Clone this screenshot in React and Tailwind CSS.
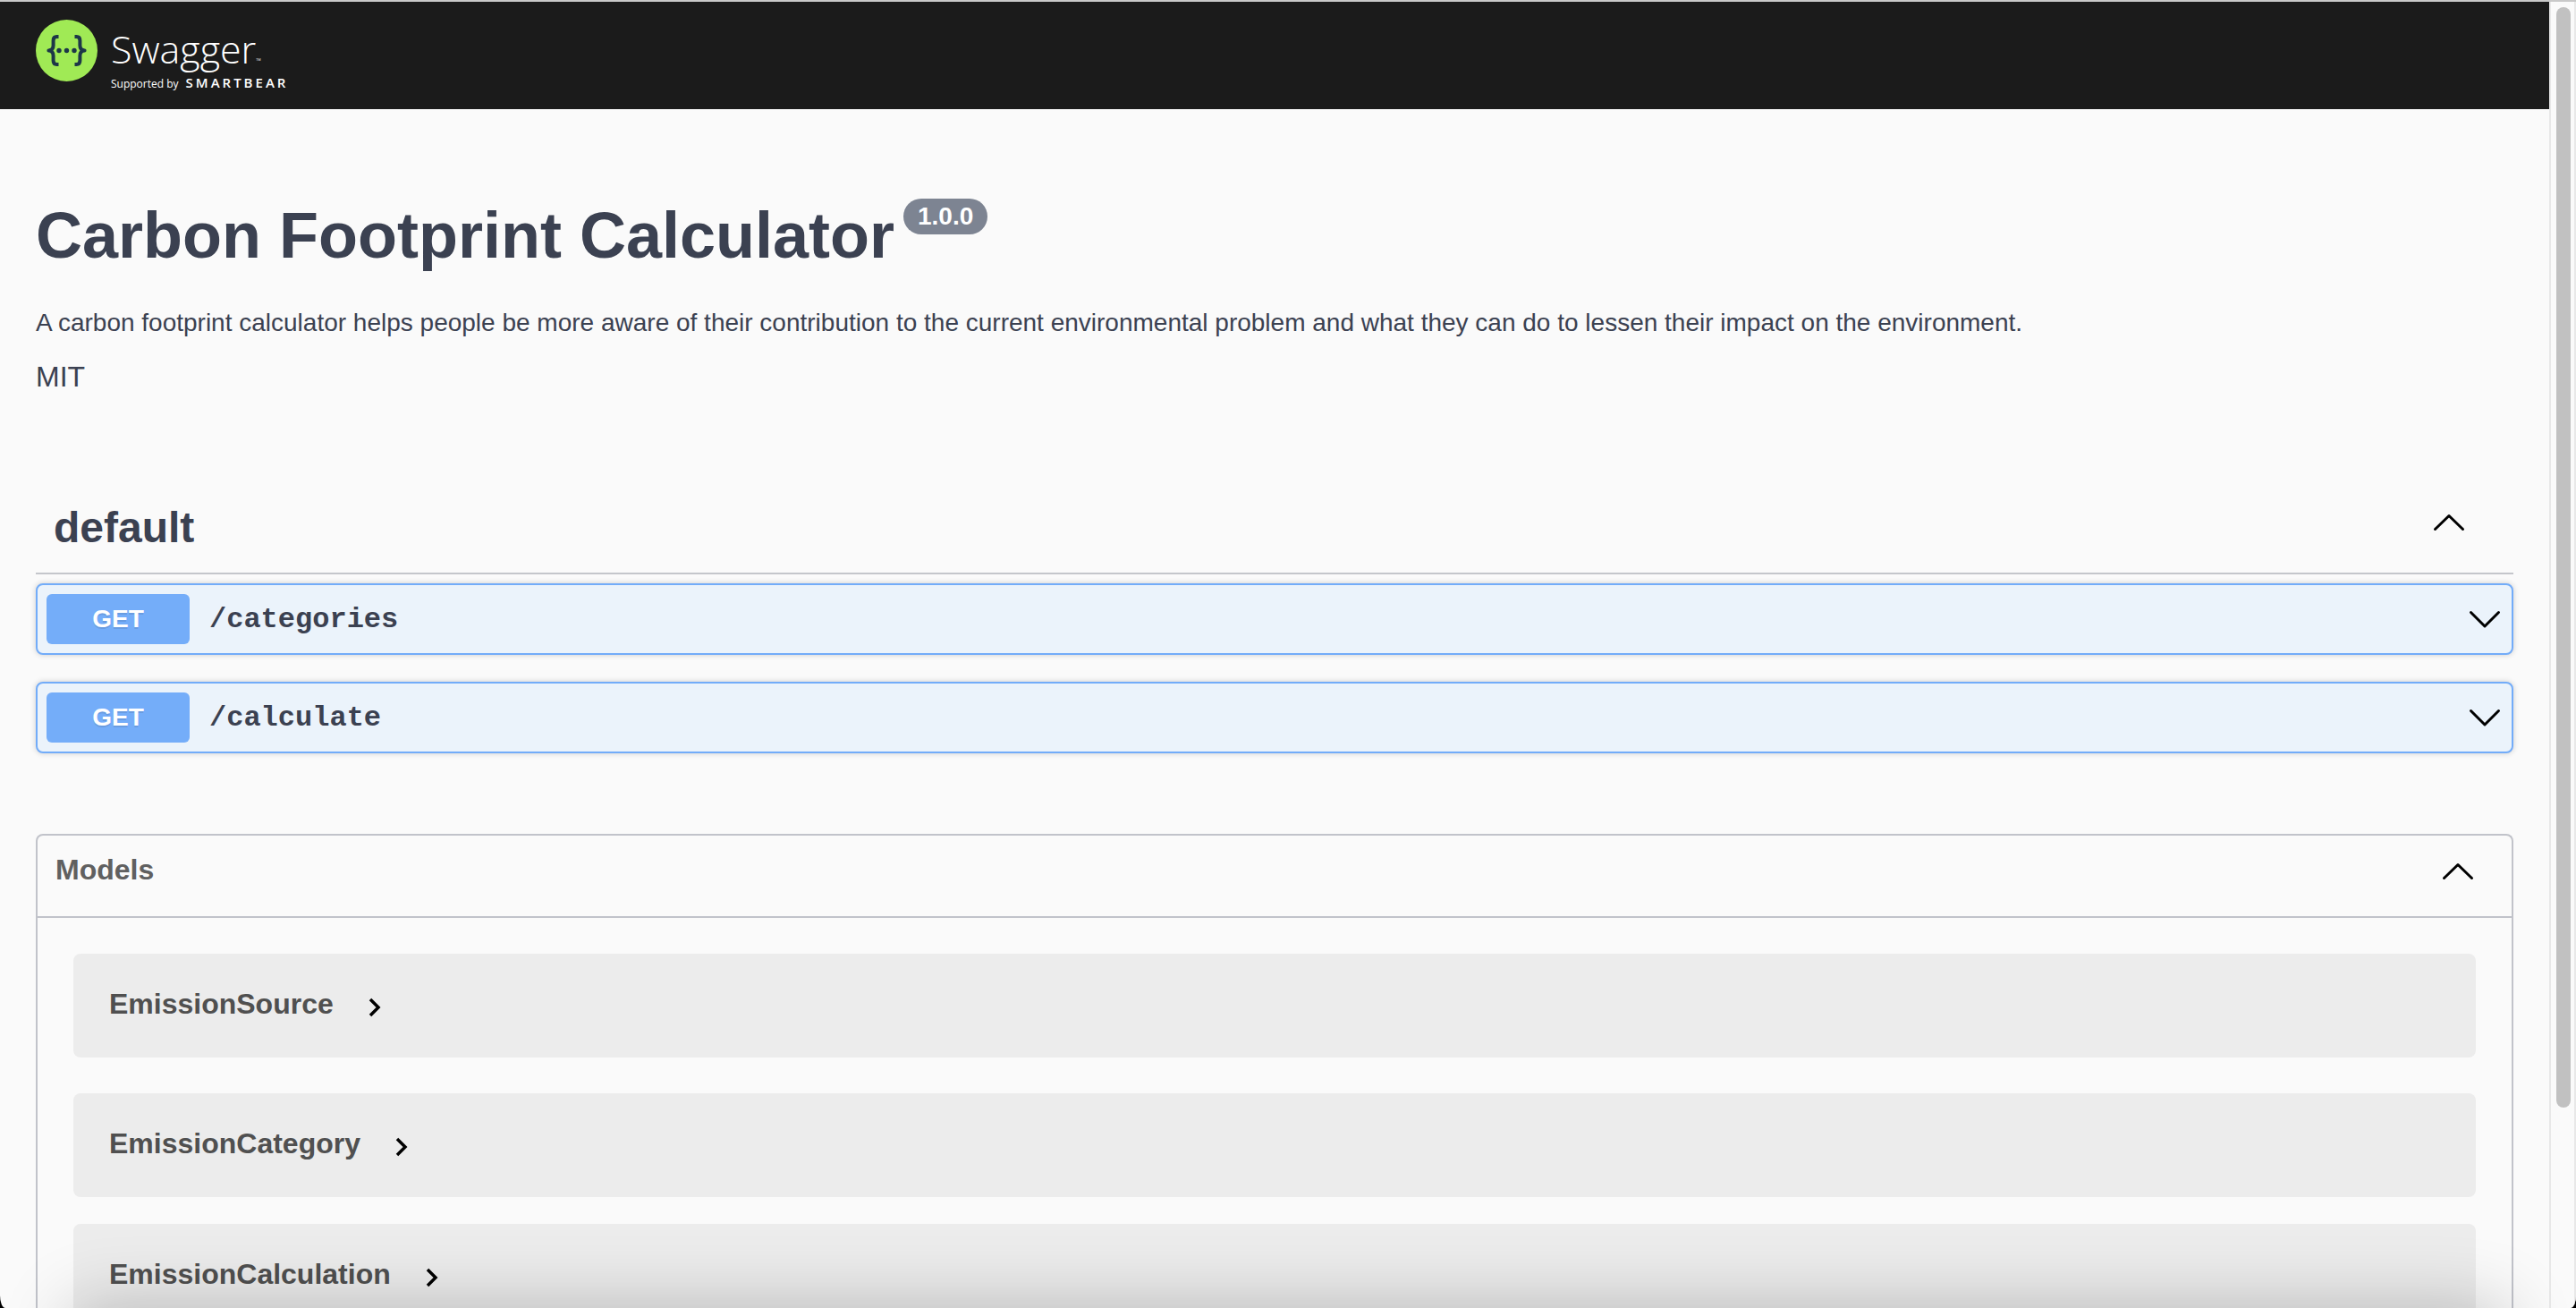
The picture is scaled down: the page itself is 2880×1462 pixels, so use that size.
const endpoints = [
  { method: "GET", path: "/categories" },
  { method: "GET", path: "/calculate" },
];

function Arrow({ up = false }) {
  return (
    <svg className="size-10 shrink-0" viewBox="0 0 40 40" fill="none" stroke="#000" strokeWidth="3" strokeLinecap="round" strokeLinejoin="round" aria-hidden="true">
      {up ? <path d="M4.500 27.500 20 12.500 35.500 27.500" /> : <path d="M4.500 12.500 20 28 35.500 12.500" />}
    </svg>
  );
}

function SwaggerMark() {
  return (
    <svg className="size-[70px] shrink-0" viewBox="0 0 70 70" aria-hidden="true">
      <circle cx="34.500" cy="34.500" r="34.500" fill="#a0ea55" />
      <g fill="none" stroke="#1d3748" strokeWidth="4" strokeLinejoin="round">
        <path d="M25.500 19h-2c-2.800 0-3.900 1.500-3.900 4.200v5.600c0 3.500-1.600 5.400-5.200 5.700 3.600.3 5.200 2.300 5.200 5.700v5.600c0 2.700 1.100 4.200 3.900 4.200h2" />
        <path d="M43.500 19h2c2.800 0 3.900 1.500 3.900 4.200v5.600c0 3.500 1.600 5.400 5.200 5.700-3.600.3-5.200 2.300-5.200 5.700v5.600c0 2.700-1.100 4.200-3.900 4.200h-2" />
      </g>
      <g fill="#1d3748">
        <circle cx="26" cy="34.500" r="2.700" />
        <circle cx="34.500" cy="34.500" r="2.700" />
        <circle cx="43" cy="34.500" r="2.700" />
      </g>
    </svg>
  );
}

function Topbar() {
  return (
    <header className="h-[120px] bg-[#1b1b1b] px-10 pt-5">
      <a href="#" className="flex w-fit gap-[14px] font-['Open_Sans',sans-serif] text-white">
        <SwaggerMark />
        <span className="flex flex-col pt-1.5">
          <span className="flex items-baseline text-[43px] leading-[54px] font-light">
            Swagger<span className="text-[8px] leading-none">™</span>
          </span>
          <span className="flex items-baseline gap-2 text-[12px] leading-[20px]">
            Supported by <span className="text-[15px] font-semibold tracking-[3px]">SMARTBEAR</span>
          </span>
        </span>
      </a>
    </header>
  );
}

function Operation({ method, path }) {
  return (
    <button type="button" className="flex w-full items-center rounded-lg border-2 border-[#72acf9] bg-[#ebf3fb] p-2.5 text-left shadow-[0_0_6px_rgba(0,0,0,0.19)]">
      <span className="w-40 rounded-md bg-[#74adf9] text-center text-[28px] leading-[56px] font-bold text-white [text-shadow:0_2px_0_rgba(0,0,0,0.1)]">{method}</span>
      <span className="flex-1 pt-0.5 pl-[22px] font-['Liberation_Mono',monospace] text-[32px] leading-[40px] font-bold">{path}</span>
      <Arrow />
    </button>
  );
}

function Model({ name, className = "mb-10" }) {
  return (
    <div className={`mx-10 rounded-lg bg-[#ececec] px-10 pt-[38px] pb-[42px] ${className}`}>
      <button type="button" className="flex items-center text-[32px] leading-9 font-bold text-[#505050]">
        {name}
        <svg className="ml-8 size-8" viewBox="0 0 32 32" fill="none" stroke="#000" strokeWidth="3.500" aria-hidden="true">
          <path d="m9 11 9 9-9 9" />
        </svg>
      </button>
    </div>
  );
}

export default function App() {
  return (
    <div className="h-screen overflow-hidden bg-black font-['Liberation_Sans',Arial,sans-serif] text-[#3b4151]">
      <div className="relative flex h-full overflow-hidden border-t-2 border-[#c9c9c9] bg-[#fafafa] [border-radius:0_0_6px_6px/0_0_14px_14px]">
        <div className="min-w-0 flex-1">
          <Topbar />
          <main className="px-10">
            <section className="pt-[100px]">
              <h1 className="flex items-start text-[72px] leading-[82px] font-bold">
                Carbon Footprint Calculator
                <span className="ml-2.5 rounded-full bg-[#7d8492] px-4 text-[28px] leading-[40px] text-white">1.0.0</span>
              </h1>
              <p className="mt-[37px] text-[28px] leading-[40px]">
                A carbon footprint calculator helps people be more aware of their contribution to the current environmental problem and what they can do to lessen their impact on the environment.
              </p>
              <p className="mt-5 text-[32px] leading-[40px]">MIT</p>
            </section>

            <section className="mt-[99px]">
              <h2>
                <button type="button" className="flex w-full items-start justify-between border-b-2 border-[#c4c6cb] py-6 pr-[52px] pl-5 text-left text-[48px] leading-[52px] font-bold">
                  default
                  <Arrow up />
                </button>
              </h2>
              <div className="mt-2.5 flex flex-col gap-[30px]">
                {endpoints.map((e) => (
                  <Operation key={e.path} {...e} />
                ))}
              </div>
            </section>

            <section className="mt-[90px] rounded-t-lg border-2 border-b-0 border-[#c1c3ca] pb-40">
              <h2 className="border-b-2 border-[#c1c3ca]">
                <button type="button" className="flex w-full items-start justify-between pt-5 pr-10 pb-[30px] pl-5 text-left text-[32px] leading-9 font-bold text-[#606060]">
                  Models
                  <Arrow up />
                </button>
              </h2>
              <div className="pt-10">
                <Model name="EmissionSource" />
                <Model name="EmissionCategory" className="mb-[30px]" />
                <Model name="EmissionCalculation" />
              </div>
            </section>
          </main>
        </div>

        <div className="w-[30px] shrink-0 border-x-2 border-[#e8e8e8] pt-1.5 pl-1.5" aria-hidden="true">
          <div className="h-11/13 w-4 rounded-full bg-[#c1c1c1]" />
        </div>

        <div className="pointer-events-none absolute inset-x-20 top-full h-20 shadow-[0_0_80px_rgba(0,0,0,0.24)]" />
      </div>
    </div>
  );
}
